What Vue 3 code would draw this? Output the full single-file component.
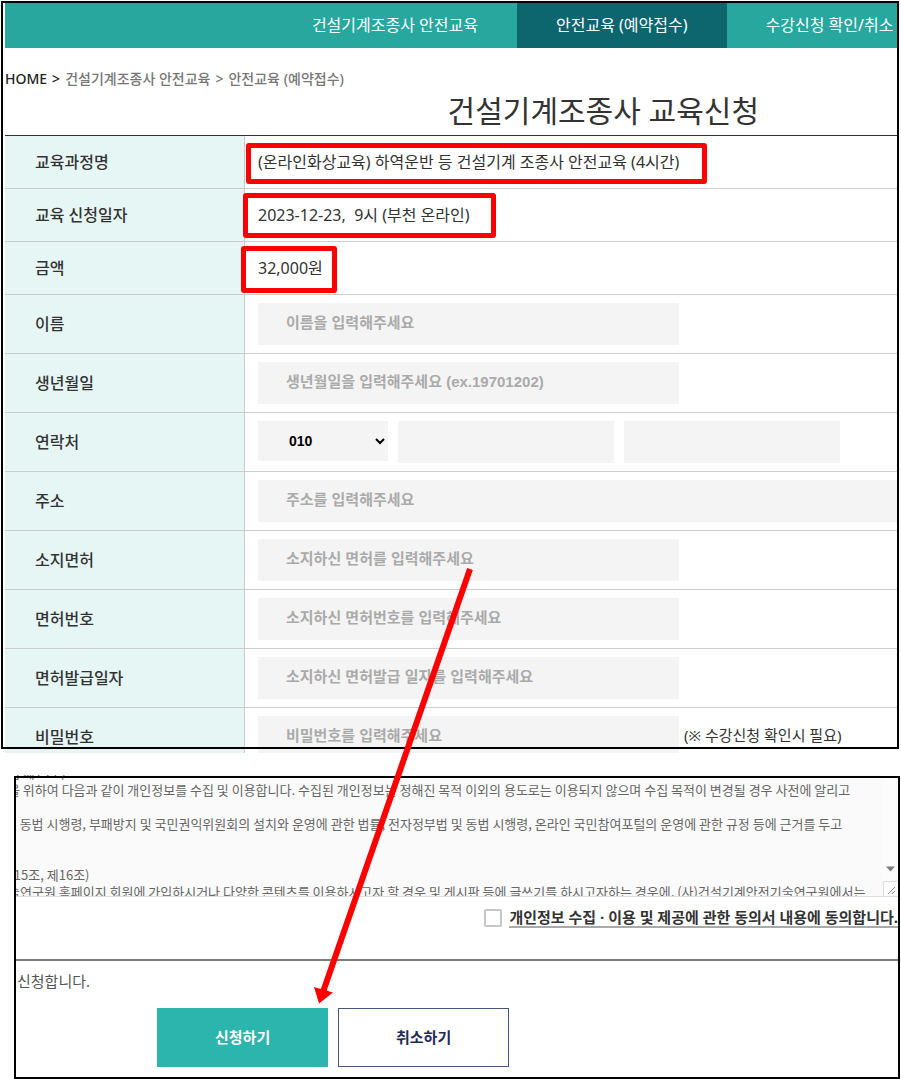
<template>
  <div class="page">
    <section class="apply">
      <nav class="tabs">
        <a
          v-for="tab in tabs"
          :key="tab.name"
          href="#"
          class="tab"
          :class="{ active: tab.active }"
          >{{ tab.name }}</a
        >
      </nav>

      <div class="breadcrumb">
        <a href="#" class="home">HOME</a>
        <span class="home">&gt;</span>
        <a href="#">건설기계조종사 안전교육</a>
        <span>&gt;</span>
        <a href="#">안전교육 (예약접수)</a>
      </div>

      <h1 class="title">건설기계조종사 교육신청</h1>

      <table class="form-table">
        <tbody>
          <tr v-for="item in infoItems" :key="item.label" class="info-row">
            <th scope="row">{{ item.label }}</th>
            <td>
              {{ item.value }}
              <span class="mark" :class="item.mark"></span>
            </td>
          </tr>
          <tr v-for="field in fields" :key="field.id">
            <th scope="row">
              <label :for="field.id">{{ field.label }}</label>
            </th>
            <td>
              <div v-if="field.type === 'phone'" class="phone">
                <select :id="field.id" v-model="form.phone1">
                  <option>010</option>
                  <option>011</option>
                  <option>016</option>
                </select>
                <input v-model="form.phone2" type="text" aria-label="연락처 가운데 자리" />
                <input v-model="form.phone3" type="text" aria-label="연락처 끝자리" />
              </div>
              <div v-else class="field">
                <input
                  :id="field.id"
                  v-model="form[field.id]"
                  :type="field.type"
                  :class="{ wide: field.wide }"
                  :placeholder="field.placeholder"
                />
                <span v-if="field.note" class="note">{{ field.note }}</span>
              </div>
            </td>
          </tr>
        </tbody>
      </table>
    </section>

    <section class="agree">
      <div class="terms">
        <textarea
          class="terms-text"
          rows="8"
          readonly
          wrap="off"
          aria-label="개인정보 수집 및 이용 동의서"
          :value="terms"
        ></textarea>
        <div class="scrollbar">
          <svg class="scroll-down" width="9" height="6" viewBox="0 0 9 6">
            <path d="M0 0.5h9L4.5 5.5z" fill="#7d7d7d" />
          </svg>
          <svg class="grip" width="15" height="15" viewBox="0 0 15 15">
            <path d="M0.5 15V0.5H15" fill="none" stroke="#dcdcdc" />
            <path d="M5 13l7-7M9 13l3-3" fill="none" stroke="#8a8a8a" />
          </svg>
        </div>
      </div>

      <div class="consent">
        <input id="consent" v-model="agreed" type="checkbox" />
        <label for="consent"
          >개인정보 수집 · 이용 및 제공에 관한 동의서 내용에 동의합니다.</label
        >
      </div>

      <p class="confirm">신청합니다.</p>

      <div class="buttons">
        <button type="button" class="btn submit">신청하기</button>
        <button type="button" class="btn cancel">취소하기</button>
      </div>
    </section>

    <svg class="arrow" width="901" height="1079" viewBox="0 0 901 1079">
      <path d="M470 569L323 992" stroke="#f00" stroke-width="6" />
      <path d="M314 987L333 992.500L319 1003.500z" fill="#f00" />
    </svg>
  </div>
</template>

<script setup>
import { reactive, ref } from 'vue';

const tabs = [
  { name: '건설기계조종사 안전교육', active: false },
  { name: '안전교육 (예약접수)', active: true },
  { name: '수강신청 확인/취소', active: false },
];

const infoItems = [
  {
    label: '교육과정명',
    value: '(온라인화상교육) 하역운반 등 건설기계 조종사 안전교육 (4시간)',
    mark: 'mark-course',
  },
  {
    label: '교육 신청일자',
    value: '2023-12-23,\u00a0 9시 (부천 온라인)',
    mark: 'mark-date',
  },
  { label: '금액', value: '32,000원', mark: 'mark-price' },
];

const fields = [
  { id: 'name', label: '이름', type: 'text', placeholder: '이름을 입력해주세요' },
  {
    id: 'birth',
    label: '생년월일',
    type: 'text',
    placeholder: '생년월일을 입력해주세요 (ex.19701202)',
  },
  { id: 'phone', label: '연락처', type: 'phone' },
  {
    id: 'address',
    label: '주소',
    type: 'text',
    placeholder: '주소를 입력해주세요',
    wide: true,
  },
  {
    id: 'license',
    label: '소지면허',
    type: 'text',
    placeholder: '소지하신 면허를 입력해주세요',
  },
  {
    id: 'licenseNo',
    label: '면허번호',
    type: 'text',
    placeholder: '소지하신 면허번호를 입력해주세요',
  },
  {
    id: 'licenseDate',
    label: '면허발급일자',
    type: 'text',
    placeholder: '소지하신 면허발급 일자를 입력해주세요',
  },
  {
    id: 'password',
    label: '비밀번호',
    type: 'password',
    placeholder: '비밀번호를 입력해주세요',
    note: '(※ 수강신청 확인시 필요)',
  },
];

const form = reactive({
  name: '',
  birth: '',
  phone1: '010',
  phone2: '',
  phone3: '',
  address: '',
  license: '',
  licenseNo: '',
  licenseDate: '',
  password: '',
});

const agreed = ref(false);

const terms = [
  '법 제15조)',
  '을 위하여 다음과 같이 개인정보를 수집 및 이용합니다. 수집된 개인정보는 정해진 목적 이외의 용도로는 이용되지 않으며 수집 목적이 변경될 경우 사전에 알리고',
  '',
  '    동법 시행령, 부패방지 및 국민권익위원회의 설치와 운영에 관한 법률, 전자정부법 및 동법 시행령, 온라인 국민참여포털의 운영에 관한 규정 등에 근거를 두고',
  '',
  '',
  '  15조, 제16조)',
  '술연구원 홈페이지 회원에 가입하시거나 다양한 콘텐츠를 이용하시고자 할 경우 및 게시판 등에 글쓰기를 하시고자하는 경우에, (사)건설기계안전기술연구원에서는',
].join('\n');
</script>

<style>
body {
  margin: 0;
  background: #fff;
}
</style>

<style scoped>
* {
  box-sizing: border-box;
}

.page {
  position: relative;
  overflow: hidden;
  font-family: 'Noto Sans', 'Noto Sans CJK KR', sans-serif;
  font-size: 16px;
  color: #333;
}

a {
  color: inherit;
  text-decoration: none;
}

.apply {
  position: relative;
  padding: 3px 3px 0 5px;
}

/* 화면 테두리 */
.apply::after {
  content: '';
  position: absolute;
  inset: 1px 2px 18px 1px;
  border: 2px solid #000;
  pointer-events: none;
}

.tabs {
  display: flex;
  padding-left: 30%;
  overflow: hidden;
  background: #27a79e;
}

.tab {
  flex: none;
  padding: 0 39px;
  line-height: 45px;
  color: #fff;
  white-space: nowrap;
}

.tab.active {
  background: #0d666e;
}

.breadcrumb {
  display: flex;
  gap: 5px;
  padding-top: 20px;
  font-size: 14px;
  font-weight: 500;
  line-height: 22px;
  color: #777;
}

.breadcrumb .home {
  color: #222;
}

.title {
  margin: 0;
  padding: 0 0 3px 34%;
  font-size: 30px;
  font-weight: 400;
  line-height: 42px;
  text-align: center;
  white-space: nowrap;
}

.form-table {
  width: 100%;
  border-spacing: 0;
  border-top: 1px solid #333;
}

th,
td {
  height: 59px;
  padding: 0;
  border-bottom: 1px solid #ccc;
  line-height: 24px;
}

.info-row th,
.info-row td {
  height: 53px;
}

th {
  width: 240px;
  padding-left: 30px;
  border-right: 1px solid #ccc;
  background: #e6f6f5;
  font-weight: 500;
  text-align: left;
}

td {
  position: relative;
  padding-left: 13px;
}

.mark {
  position: absolute;
  border: 5px solid #f00;
  border-radius: 3px;
}

.mark-course {
  top: 7px;
  left: 1px;
  width: 461px;
  height: 41px;
}

.mark-date {
  top: 4px;
  left: -2px;
  width: 253px;
  height: 45px;
}

.mark-price {
  top: 4px;
  left: -4px;
  width: 96px;
  height: 47px;
}

.field {
  display: flex;
  align-items: center;
  gap: 5px;
}

.field input,
.phone input,
.phone select {
  height: 42px;
  border: 0;
  border-radius: 0;
  background: #f4f4f4;
  font-family: 'Liberation Sans', 'Noto Sans CJK KR', sans-serif;
  font-size: 15px;
  font-weight: 700;
}

.field input {
  width: 421px;
  padding: 0 28px 4px;
}

.field input.wide {
  width: 100%;
}

.field input::placeholder {
  color: #aaa;
}

.note {
  padding-bottom: 4px;
  font-size: 15px;
}

.phone {
  display: flex;
  gap: 10px;
}

.phone select {
  width: 130px;
  height: 40px;
  padding-left: 27px;
  font-size: 14px;
  color: #000;
}

.phone input {
  width: 216px;
  padding: 0 28px;
}

.agree {
  position: relative;
  margin-top: -14px;
  padding: 22px 3px 12px 16px;
  background: #fff;
}

.agree::after {
  content: '';
  position: absolute;
  inset: 23px 1px 0 14px;
  border: 2px solid #000;
  pointer-events: none;
}

.terms {
  display: flex;
  height: 122px;
  overflow: hidden;
  border-bottom: 1px solid #ddd;
  background: #fafafa;
}

/* 스크롤된 상태의 약관 영역 */
.terms-text {
  flex: 1;
  height: 136px;
  margin: -11px 0 0 -8px;
  padding: 0;
  border: 0;
  overflow: hidden;
  resize: none;
  background: transparent;
  font-family: 'Noto Sans CJK KR', sans-serif;
  font-size: 13px;
  line-height: 17px;
  color: #666;
  white-space: pre;
}

.scrollbar {
  display: flex;
  flex-direction: column;
  align-items: center;
  justify-content: flex-end;
  gap: 9px;
  width: 15px;
  background: #fcfcfc;
}

.consent {
  display: flex;
  align-items: center;
  justify-content: flex-end;
  gap: 7px;
  padding: 11px 0 31px;
  border-bottom: 2px solid #7a7e7b;
}

.consent input {
  appearance: none;
  width: 18px;
  height: 18px;
  margin: 0;
  border: 2px solid #c6c6c6;
  border-radius: 2px;
  background: #fff;
}

.consent input:checked {
  background: #2bb5ac;
}

.consent label {
  border-bottom: 2px solid #aaa;
  font-size: 15px;
  font-weight: 700;
  line-height: 18px;
  white-space: nowrap;
}

.confirm {
  margin: 10px 0 17px;
  padding-left: 1px;
  font-size: 15px;
  line-height: 20px;
  color: #555;
}

.buttons {
  display: flex;
  gap: 10px;
  padding-left: 16%;
}

.btn {
  width: 171px;
  height: 59px;
  padding-bottom: 3px;
  border: 1px solid #2bb5ac;
  font-family: inherit;
  font-size: 15px;
  font-weight: 700;
}

.submit {
  background: #2bb5ac;
  color: #fff;
}

.cancel {
  border-color: #46557e;
  background: #fff;
  color: #1f2b55;
}

.arrow {
  position: absolute;
  top: 0;
  left: 0;
  pointer-events: none;
}
</style>
